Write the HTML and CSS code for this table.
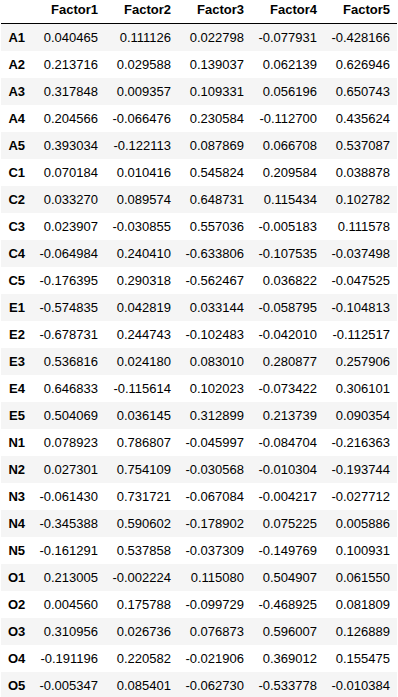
FILE: index.html
```html
<!DOCTYPE html>
<html>
<head>
<meta charset="utf-8">
<link rel="stylesheet" href="styles.css">
</head>
<body>
<table class="df">
<colgroup><col class="c-idx"><col class="c-num"><col class="c-num"><col class="c-num"><col class="c-num"><col class="c-num"></colgroup>
<thead>
<tr><th></th><th>Factor1</th><th>Factor2</th><th>Factor3</th><th>Factor4</th><th>Factor5</th></tr>
</thead>
<tbody>
<tr><th>A1</th><td>0.040465</td><td>0.111126</td><td>0.022798</td><td>-0.077931</td><td>-0.428166</td></tr>
<tr><th>A2</th><td>0.213716</td><td>0.029588</td><td>0.139037</td><td>0.062139</td><td>0.626946</td></tr>
<tr><th>A3</th><td>0.317848</td><td>0.009357</td><td>0.109331</td><td>0.056196</td><td>0.650743</td></tr>
<tr><th>A4</th><td>0.204566</td><td>-0.066476</td><td>0.230584</td><td>-0.112700</td><td>0.435624</td></tr>
<tr><th>A5</th><td>0.393034</td><td>-0.122113</td><td>0.087869</td><td>0.066708</td><td>0.537087</td></tr>
<tr><th>C1</th><td>0.070184</td><td>0.010416</td><td>0.545824</td><td>0.209584</td><td>0.038878</td></tr>
<tr><th>C2</th><td>0.033270</td><td>0.089574</td><td>0.648731</td><td>0.115434</td><td>0.102782</td></tr>
<tr><th>C3</th><td>0.023907</td><td>-0.030855</td><td>0.557036</td><td>-0.005183</td><td>0.111578</td></tr>
<tr><th>C4</th><td>-0.064984</td><td>0.240410</td><td>-0.633806</td><td>-0.107535</td><td>-0.037498</td></tr>
<tr><th>C5</th><td>-0.176395</td><td>0.290318</td><td>-0.562467</td><td>0.036822</td><td>-0.047525</td></tr>
<tr><th>E1</th><td>-0.574835</td><td>0.042819</td><td>0.033144</td><td>-0.058795</td><td>-0.104813</td></tr>
<tr><th>E2</th><td>-0.678731</td><td>0.244743</td><td>-0.102483</td><td>-0.042010</td><td>-0.112517</td></tr>
<tr><th>E3</th><td>0.536816</td><td>0.024180</td><td>0.083010</td><td>0.280877</td><td>0.257906</td></tr>
<tr><th>E4</th><td>0.646833</td><td>-0.115614</td><td>0.102023</td><td>-0.073422</td><td>0.306101</td></tr>
<tr><th>E5</th><td>0.504069</td><td>0.036145</td><td>0.312899</td><td>0.213739</td><td>0.090354</td></tr>
<tr><th>N1</th><td>0.078923</td><td>0.786807</td><td>-0.045997</td><td>-0.084704</td><td>-0.216363</td></tr>
<tr><th>N2</th><td>0.027301</td><td>0.754109</td><td>-0.030568</td><td>-0.010304</td><td>-0.193744</td></tr>
<tr><th>N3</th><td>-0.061430</td><td>0.731721</td><td>-0.067084</td><td>-0.004217</td><td>-0.027712</td></tr>
<tr><th>N4</th><td>-0.345388</td><td>0.590602</td><td>-0.178902</td><td>0.075225</td><td>0.005886</td></tr>
<tr><th>N5</th><td>-0.161291</td><td>0.537858</td><td>-0.037309</td><td>-0.149769</td><td>0.100931</td></tr>
<tr><th>O1</th><td>0.213005</td><td>-0.002224</td><td>0.115080</td><td>0.504907</td><td>0.061550</td></tr>
<tr><th>O2</th><td>0.004560</td><td>0.175788</td><td>-0.099729</td><td>-0.468925</td><td>0.081809</td></tr>
<tr><th>O3</th><td>0.310956</td><td>0.026736</td><td>0.076873</td><td>0.596007</td><td>0.126889</td></tr>
<tr><th>O4</th><td>-0.191196</td><td>0.220582</td><td>-0.021906</td><td>0.369012</td><td>0.155475</td></tr>
<tr><th>O5</th><td>-0.005347</td><td>0.085401</td><td>-0.062730</td><td>-0.533778</td><td>-0.010384</td></tr>
</tbody>
</table>
</body>
</html>
```
FILE: styles.css
```css
html, body {
  margin: 0;
  padding: 0;
  background: #ffffff;
}
body {
  font-family: "Liberation Sans", Arial, sans-serif;
  font-size: 13px;
  color: #000000;
  overflow: hidden;
}
.df {
  border-collapse: collapse;
  border-spacing: 0;
  table-layout: fixed;
  width: 396px;
  margin: -4px 0 0 1px;
}
.c-idx { width: 31px; }
.c-num { width: 73px; }
.df th,
.df td {
  padding: 6px 7px;
  line-height: 15px;
  text-align: right;
  vertical-align: middle;
  white-space: nowrap;
  border: none;
}
.df th {
  font-weight: bold;
}
.df thead th {
  border-bottom: 1px solid #000000;
}
.df tbody tr:nth-child(odd) {
  background: #f5f5f5;
}
```
